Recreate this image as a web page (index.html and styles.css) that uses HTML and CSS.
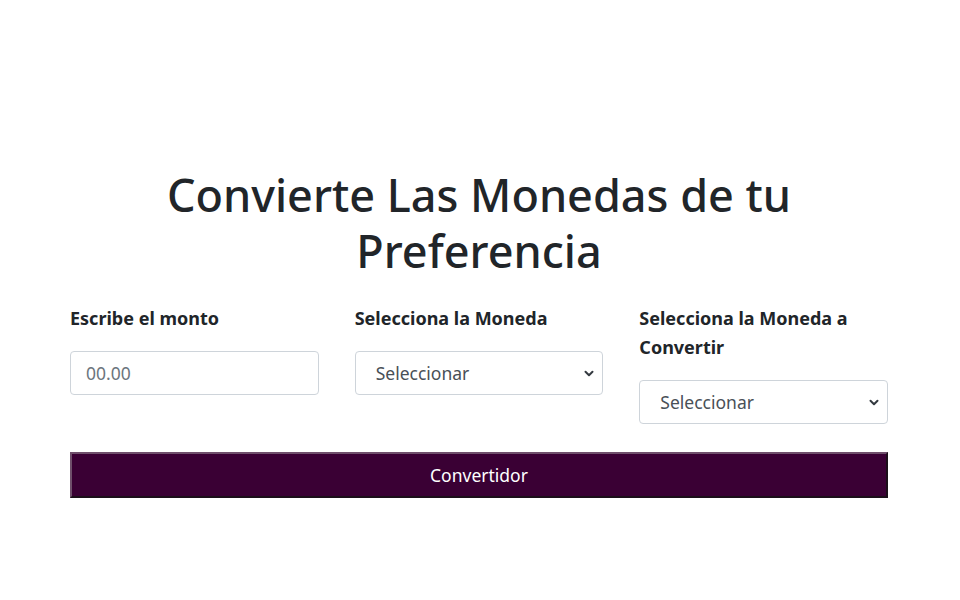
FILE: index.html
```html
<!DOCTYPE html>
<html lang="es">
<head>
<meta charset="utf-8">
<title>Convertidor</title>
<link rel="stylesheet" href="styles.css">
</head>
<body>
<main class="page">
  <h1 class="title">Convierte Las Monedas de tu Preferencia</h1>
  <form class="form">
    <div class="fields">
      <div class="field">
        <label class="label" for="monto">Escribe el monto</label>
        <input class="control" id="monto" type="text" placeholder="00.00">
      </div>
      <div class="field">
        <label class="label" for="de">Selecciona la Moneda</label>
        <div class="select">
          <span class="select-text">Seleccionar</span>
          <svg class="chev" width="10" height="7" viewBox="0 0 10 7"><path d="M1.5 1.8 5 5.2 8.5 1.8" fill="none" stroke="#343a40" stroke-width="2" stroke-linecap="round" stroke-linejoin="round"/></svg>
        </div>
      </div>
      <div class="field">
        <label class="label" for="a">Selecciona la Moneda a Convertir</label>
        <div class="select">
          <span class="select-text">Seleccionar</span>
          <svg class="chev" width="10" height="7" viewBox="0 0 10 7"><path d="M1.5 1.8 5 5.2 8.5 1.8" fill="none" stroke="#343a40" stroke-width="2" stroke-linecap="round" stroke-linejoin="round"/></svg>
        </div>
      </div>
    </div>
    <button class="btn" type="button">Convertidor</button>
  </form>
</main>
</body>
</html>
```
FILE: styles.css
```css
* { box-sizing: border-box; }
html, body { margin: 0; background: #fff; }
body {
  font-family: "Noto Sans", "Open Sans", sans-serif;
  color: #212529;
}
.page {
  width: 818px;
  margin: 0 0 0 70px;
  padding-top: 167px;
}
.title {
  margin: 0 auto 25px;
  max-width: 680px;
  text-align: center;
  font-size: 45px;
  font-weight: 500;
  line-height: 56px;
}
.fields {
  display: grid;
  grid-template-columns: repeat(3, minmax(0, 1fr));
  column-gap: 36px;
  align-items: start;
}
.field { display: flex; flex-direction: column; min-width: 0; }
.label {
  font-weight: 700;
  font-size: 18px;
  line-height: 29px;
  margin-bottom: 18px;
}
.control, .select {
  width: 100%;
  height: 44px;
  border: 1px solid #ced4da;
  border-radius: 4px;
  background: #fff;
  font-family: inherit;
  font-size: 17.5px;
  color: #495057;
}
.control { padding: 0 15px; outline: none; }
.control::placeholder { color: #6c757d; }
.select {
  display: flex;
  align-items: center;
  justify-content: space-between;
  padding: 0 8px 0 20px;
}
.btn {
  display: block;
  width: 100%;
  height: 46px;
  margin-top: 28px;
  background: #3a0034;
  color: #fff;
  font-family: inherit;
  font-size: 17.5px;
  border-style: solid;
  border-width: 2px;
  border-color: #6f4f6b #1b0f19 #1b0f19 #6f4f6b;
  padding: 0;
}
```
